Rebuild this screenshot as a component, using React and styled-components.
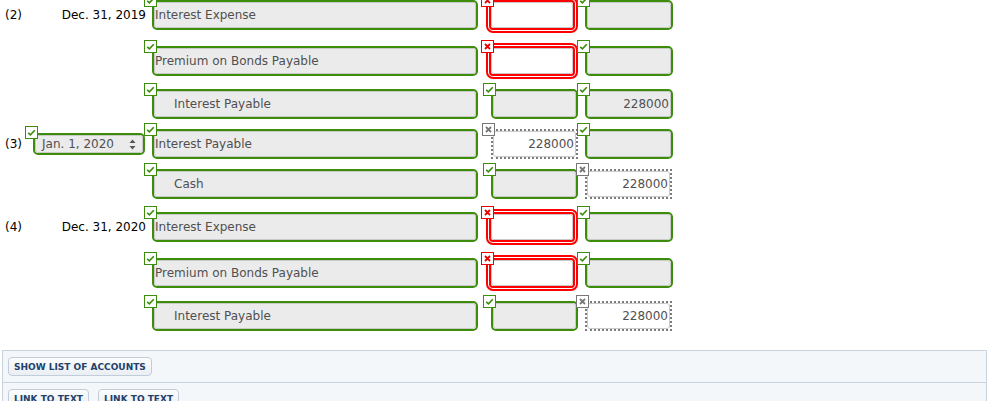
import React from "react";
import styled, { createGlobalStyle } from "styled-components";

const GlobalStyle = createGlobalStyle`
  body {
    margin: 0;
    background: #fff;
    font-family: "DejaVu Sans", Verdana, sans-serif;
    font-size: 12px;
  }
`;

const GREEN = "#3b8d0b";

const Page = styled.div`
  width: 993px;
  height: 401px;
  overflow: hidden;
`;

// the page is scrolled a little, first row is cut at the top
const Journal = styled.div`
  margin-top: -8px;
`;

const Row = styled.div`
  display: flex;
  align-items: center;
  padding: 5px 0;
`;

const Num = styled.div`
  flex: 0 0 30px;
  box-sizing: border-box;
  padding-left: 5px;
  color: #000;
`;

const DateCell = styled.div`
  flex: 0 0 116px;
  display: flex;
  justify-content: flex-end;
  color: #000;
`;

const Slot = styled.div`
  position: relative;
  flex: 0 0 auto;
  margin-left: ${(p) => p.$gap || 0}px;
  margin-right: ${(p) => p.$after || 0}px;
`;

const Mark = styled.span`
  position: absolute;
  left: ${(p) => p.$dx}px;
  top: ${(p) => p.$dy}px;
  z-index: 2;
  width: 13px;
  height: 13px;
  box-sizing: border-box;
  border: 1.5px solid ${(p) => p.$color};
  background: #fff;
  display: flex;
  align-items: center;
  justify-content: center;
`;

const GreenBox = styled.div`
  width: ${(p) => p.$w}px;
  height: ${(p) => p.$h || 30}px;
  box-sizing: border-box;
  border: 2px solid ${GREEN};
  border-radius: 5px;
`;

const RedBox = styled.div`
  width: 92px;
  height: 36px;
  box-sizing: border-box;
  border: 5px double #f00;
  border-radius: 7px;
`;

const DottedBox = styled.div`
  width: 87px;
  height: 30px;
  box-sizing: border-box;
  border: 2px dotted #7b7b7b;
`;

const Inner = styled.div`
  height: 100%;
  box-sizing: border-box;
  border: 1px solid #c9c9c9;
  border-radius: 3px;
  background: ${(p) => (p.$blank ? "#fff" : "#ebebec")};
  color: #505050;
  display: flex;
  align-items: center;
  justify-content: ${(p) => (p.$num ? "flex-end" : "flex-start")};
  padding: 0 ${(p) => (p.$num ? 1 : 0)}px 0 ${(p) => p.$indent || 0}px;
  white-space: nowrap;
`;

const SelectInner = styled(Inner)`
  justify-content: space-between;
  padding: 0 6px 0 6px;
`;

const Panel = styled.div`
  margin: 14px 0 0 2px;
  width: 985px;
  box-sizing: border-box;
  border: 1px solid #c9d3de;
  background: #f4f7fa;
`;

const PanelSection = styled.div`
  display: flex;
  gap: 9px;
  padding: 6px 5px;
  & + & {
    border-top: 1px solid #c9d3de;
  }
`;

const ToolButton = styled.button`
  height: 19px;
  padding: 0 5px;
  border: 1px solid #c3cdd9;
  border-radius: 4px;
  background: linear-gradient(#fbfcfd, #eaeff4);
  color: #22416c;
  font-family: "DejaVu Sans", Verdana, sans-serif;
  font-weight: bold;
  font-size: 9px;
`;

const Check = () => (
  <svg width="9" height="7" viewBox="0 0 9 7">
    <polyline points="1.2,3.8 3.4,5.8 7.8,1.2" fill="none" stroke={GREEN} strokeWidth="1.6" />
  </svg>
);

const Cross = ({ color }) => (
  <svg width="7" height="7" viewBox="0 0 7 7">
    <path d="M1 1L6 6M6 1L1 6" stroke={color} strokeWidth="1.8" />
  </svg>
);

const Marker = ({ kind, dx, dy }) => {
  if (kind === "ok")
    return (
      <Mark $color={GREEN} $dx={dx} $dy={dy}>
        <Check />
      </Mark>
    );
  const color = kind === "bad" ? "#ee0000" : "#777";
  return (
    <Mark $color={color} $dx={dx} $dy={dy}>
      <Cross color={color} />
    </Mark>
  );
};

// one amount / account box with its marker
const Field = ({ kind, w, gap, text, indent, num }) => {
  if (kind === "bad")
    return (
      <Slot $gap={gap}>
        <Marker kind="bad" dx={-5} dy={-3} />
        <RedBox>
          <Inner $blank />
        </RedBox>
      </Slot>
    );
  if (kind === "miss")
    return (
      <Slot $gap={gap}>
        <Marker kind="miss" dx={-9} dy={-6} />
        <DottedBox>
          <Inner $blank $num={num}>{text}</Inner>
        </DottedBox>
      </Slot>
    );
  return (
    <Slot $gap={gap}>
      <Marker kind="ok" dx={-8} dy={-6} />
      <GreenBox $w={w}>
        <Inner $num={num} $indent={indent}>
          {text}
        </Inner>
      </GreenBox>
    </Slot>
  );
};

const Arrows = () => (
  <svg width="7" height="11" viewBox="0 0 7 11">
    <path d="M3.5 0.5L6.5 4H0.5Z M3.5 10.5L6.5 7H0.5Z" fill="#555" />
  </svg>
);

const rows = [
  { n: "(2)", date: "Dec. 31, 2019", acct: "Interest Expense", dr: { kind: "bad" }, cr: { kind: "ok" } },
  { acct: "Premium on Bonds Payable", dr: { kind: "bad" }, cr: { kind: "ok" } },
  { acct: "Interest Payable", indent: true, dr: { kind: "ok" }, cr: { kind: "ok", text: "228000" } },
  { n: "(3)", select: "Jan. 1, 2020", acct: "Interest Payable", dr: { kind: "miss", text: "228000" }, cr: { kind: "ok" } },
  { acct: "Cash", indent: true, dr: { kind: "ok" }, cr: { kind: "miss", text: "228000" } },
  { n: "(4)", date: "Dec. 31, 2020", acct: "Interest Expense", dr: { kind: "bad" }, cr: { kind: "ok" } },
  { acct: "Premium on Bonds Payable", dr: { kind: "bad" }, cr: { kind: "ok" } },
  { acct: "Interest Payable", indent: true, dr: { kind: "ok" }, cr: { kind: "miss", text: "228000" } },
];

const JournalRow = ({ row }) => (
  <Row>
    <Num>{row.n}</Num>
    <DateCell>
      {row.select ? (
        <Slot $after={1}>
          <Marker kind="ok" dx={-8} dy={-7} />
          <GreenBox $w={112} $h={22}>
            <SelectInner>
              {row.select}
              <Arrows />
            </SelectInner>
          </GreenBox>
        </Slot>
      ) : (
        row.date
      )}
    </DateCell>
    <Field kind="ok" w={326} gap={6} text={row.acct} indent={row.indent ? 19 : 0} />
    {row.dr.kind === "bad" ? (
      <Field kind="bad" gap={8} />
    ) : (
      <Field kind={row.dr.kind} w={87} gap={13} text={row.dr.text} num />
    )}
    <Field kind={row.cr.kind} w={88} gap={7} text={row.cr.text} num />
  </Row>
);

export default function App() {
  return (
    <Page>
      <GlobalStyle />
      <Journal>
        {rows.map((r, i) => (
          <JournalRow key={i} row={r} />
        ))}
      </Journal>
      <Panel>
        <PanelSection>
          <ToolButton>SHOW LIST OF ACCOUNTS</ToolButton>
        </PanelSection>
        <PanelSection>
          <ToolButton>LINK TO TEXT</ToolButton>
          <ToolButton>LINK TO TEXT</ToolButton>
        </PanelSection>
      </Panel>
    </Page>
  );
}
